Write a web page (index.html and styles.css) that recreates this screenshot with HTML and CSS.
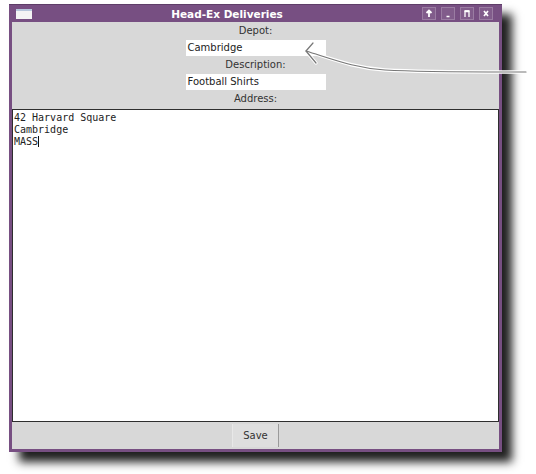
FILE: index.html
```html
<!DOCTYPE html>
<html lang="en">
<head>
<meta charset="utf-8">
<title>Head-Ex Deliveries</title>
<link rel="stylesheet" href="styles.css">
</head>
<body>
<div class="window">
  <div class="titlebar">
    <span class="app-icon"></span>
    <span class="title">Head-Ex Deliveries</span>
    <div class="controls">
      <span class="ctl"><svg width="14" height="13" viewBox="0 0 14 13"><path d="M7 3.5 L7 10 M4.5 6 L7 3.5 L9.5 6" fill="none" stroke="#fff" stroke-width="1.8"/></svg></span>
      <span class="ctl"><svg width="14" height="13" viewBox="0 0 14 13"><path d="M5.5 9.5 H8.5" stroke="#fff" stroke-width="1.5"/></svg></span>
      <span class="ctl"><svg width="14" height="13" viewBox="0 0 14 13"><path d="M5 10 V4.5 H9 V10" fill="none" stroke="#fff" stroke-width="1.3"/><path d="M4.5 4 H9.5" stroke="#fff" stroke-width="1.8"/></svg></span>
      <span class="ctl"><svg width="14" height="13" viewBox="0 0 14 13"><path d="M5 4 L9 9 M9 4 L5 9" stroke="#fff" stroke-width="1.7"/></svg></span>
    </div>
  </div>
  <div class="client">
    <div class="form">
      <div class="label">Depot:</div>
      <div class="field">Cambridge</div>
      <div class="label">Description:</div>
      <div class="field">Football Shirts</div>
      <div class="label">Address:</div>
    </div>
    <div class="textarea">42 Harvard Square<br>Cambridge<br>MASS<span class="caret"></span></div>
    <div class="footer"><button class="btn">Save</button></div>
  </div>
</div>
<svg class="callout" width="536" height="474" viewBox="0 0 536 474">
  <g fill="none" stroke-linecap="round" stroke-linejoin="round">
    <path d="M306 51 C 335 60, 355 68, 385 70 C 420 72, 470 72, 526 72" stroke="#fff" stroke-width="3.4"/>
    <path d="M313 43 L306 51 L316 63" stroke="#fff" stroke-width="3.4"/>
    <path d="M306 51 C 335 60, 355 68, 385 70 C 420 72, 470 72, 526 72" stroke="#777" stroke-width="1.2"/>
    <path d="M313 43 L306 51 L316 63" stroke="#777" stroke-width="1.2"/>
  </g>
</svg>
</body>
</html>
```
FILE: styles.css
```css
html, body {
  margin: 0;
  padding: 0;
  background: #ffffff;
}
body {
  position: relative;
  width: 536px;
  height: 474px;
  overflow: hidden;
  font-family: "DejaVu Sans", "Liberation Sans", sans-serif;
}
.window {
  margin: 4px 0 0 9px;
  width: 493px;
  height: 448px;
  background: #774f82;
  display: flex;
  flex-direction: column;
  box-shadow: 10px 10px 9px rgba(0, 0, 0, 0.88);
  box-sizing: border-box;
  border-top: 1px solid #5e3d68;
}
.titlebar {
  height: 17px;
  display: flex;
  align-items: center;
  padding: 0 9px 0 7px;
  flex: none;
}
.app-icon {
  width: 16px;
  height: 10px;
  background: #f4f4f4;
  border-top: 2px solid #b7c7dc;
  box-sizing: border-box;
  flex: none;
}
.title {
  flex: 1;
  text-align: center;
  color: #ffffff;
  font-weight: bold;
  font-size: 10.5px;
}
.controls {
  display: flex;
  gap: 5px;
}
.ctl {
  width: 14px;
  height: 13px;
  box-sizing: border-box;
  border: 1px solid rgba(255, 255, 255, 0.2);
  background: rgba(255, 255, 255, 0.08);
  display: flex;
}
.ctl svg {
  margin: -1px;
}
.client {
  flex: 1;
  margin: 0 3px 3px 3px;
  background: #d8d8d8;
  display: flex;
  flex-direction: column;
  min-height: 0;
}
.form {
  display: flex;
  flex-direction: column;
  align-items: center;
  padding: 1px 0 2px;
  flex: none;
}
.label {
  height: 16px;
  line-height: 16px;
  font-size: 10px;
  color: #333333;
}
.field {
  width: 140px;
  height: 16px;
  margin: 1px 0;
  background: #ffffff;
  font-size: 10px;
  line-height: 16px;
  color: #222222;
  padding-left: 2px;
  box-sizing: border-box;
}
.textarea {
  flex: 1;
  background: #ffffff;
  border: 1px solid #2e2e2e;
  padding: 2px 1px;
  font-family: "DejaVu Sans Mono", "Liberation Mono", monospace;
  font-size: 10px;
  line-height: 12px;
  color: #222222;
}
.caret {
  display: inline-block;
  width: 1px;
  height: 11px;
  background: #111111;
  vertical-align: -2px;
}
.footer {
  height: 27px;
  flex: none;
  display: flex;
  justify-content: center;
  align-items: flex-start;
}
.btn {
  margin-top: 2px;
  width: 47px;
  height: 23px;
  font-family: "DejaVu Sans", "Liberation Sans", sans-serif;
  font-size: 10px;
  color: #333333;
  background: #dedede;
  border: none;
  border-left: 1px solid #e8e8e8;
  border-right: 1px solid #9a9a9a;
  padding: 0;
}
.callout {
  position: absolute;
  left: 0;
  top: 0;
  pointer-events: none;
}
```
